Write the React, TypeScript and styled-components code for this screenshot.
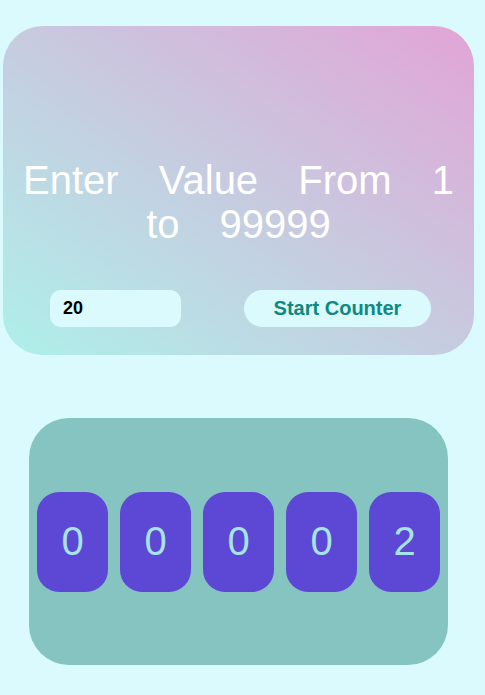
import React, {useState} from "react";
import styled, {createGlobalStyle} from "styled-components";

const GlobalStyle = createGlobalStyle`
  html, body {
    margin: 0;
    padding: 0;
    background: #dafafd;
    font-family: "Liberation Sans", Arial, sans-serif;
  }
`;

const Page = styled.div`
  display: flex;
  flex-direction: column;
  align-items: flex-start;
  padding: 26px 0 30px 3px;
  gap: 63px;
`;

const InputCard = styled.div`
  box-sizing: border-box;
  width: 471px;
  height: 329px;
  border-radius: 40px;
  background: linear-gradient(35deg, #aef0ea 0%, #c4cfe1 45%, #e2a4d6 100%);
  display: flex;
  flex-direction: column;
  align-items: center;
  padding: 132px 16px 0;
`;

const Title = styled.h1`
  margin: 0;
  width: 100%;
  color: #ffffff;
  font-size: 40px;
  font-weight: 400;
  line-height: 44px;
  text-align: center;
  word-spacing: 29px;
`;

const Controls = styled.div`
  display: flex;
  align-items: center;
  justify-content: space-between;
  width: 381px;
  margin: 44px 0 0 4px;
`;

const ValueInput = styled.input`
  box-sizing: border-box;
  width: 131px;
  height: 37px;
  border: none;
  outline: none;
  border-radius: 11px;
  background: #dafafd;
  padding: 0 13px;
  font-family: "Liberation Sans", Arial, sans-serif;
  font-size: 18px;
  font-weight: 700;
  color: #000;
`;

const StartButton = styled.button`
  width: 187px;
  height: 37px;
  border: none;
  border-radius: 19px;
  background: #dafafd;
  color: #0d8a80;
  font-family: "Liberation Sans", Arial, sans-serif;
  font-size: 20px;
  font-weight: 700;
  cursor: pointer;
`;

const CounterCard = styled.div`
  box-sizing: border-box;
  margin-left: 26px;
  width: 419px;
  height: 247px;
  border-radius: 40px;
  background: #85c4c0;
  display: flex;
  align-items: center;
  justify-content: center;
  gap: 12px;
`;

const Digit = styled.div`
  width: 71px;
  height: 100px;
  border-radius: 22px;
  background: #5c48d4;
  color: #a6e4e8;
  font-size: 40px;
  display: flex;
  align-items: center;
  justify-content: center;
`;

const App: React.FC = () => {
  const [value, setValue] = useState("20");
  const [count, setCount] = useState(2);

  const digits = String(count).padStart(5, "0").split("");

  return (
    <>
      <GlobalStyle />
      <Page>
        <InputCard>
          <Title>Enter Value From 1 to 99999</Title>
          <Controls>
            <ValueInput value={value} onChange={(e) => setValue(e.target.value)} />
            <StartButton onClick={() => setCount(0)}>Start Counter</StartButton>
          </Controls>
        </InputCard>
        <CounterCard>
          {digits.map((d, i) => (
            <Digit key={i}>{d}</Digit>
          ))}
        </CounterCard>
      </Page>
    </>
  );
};

export default App;
